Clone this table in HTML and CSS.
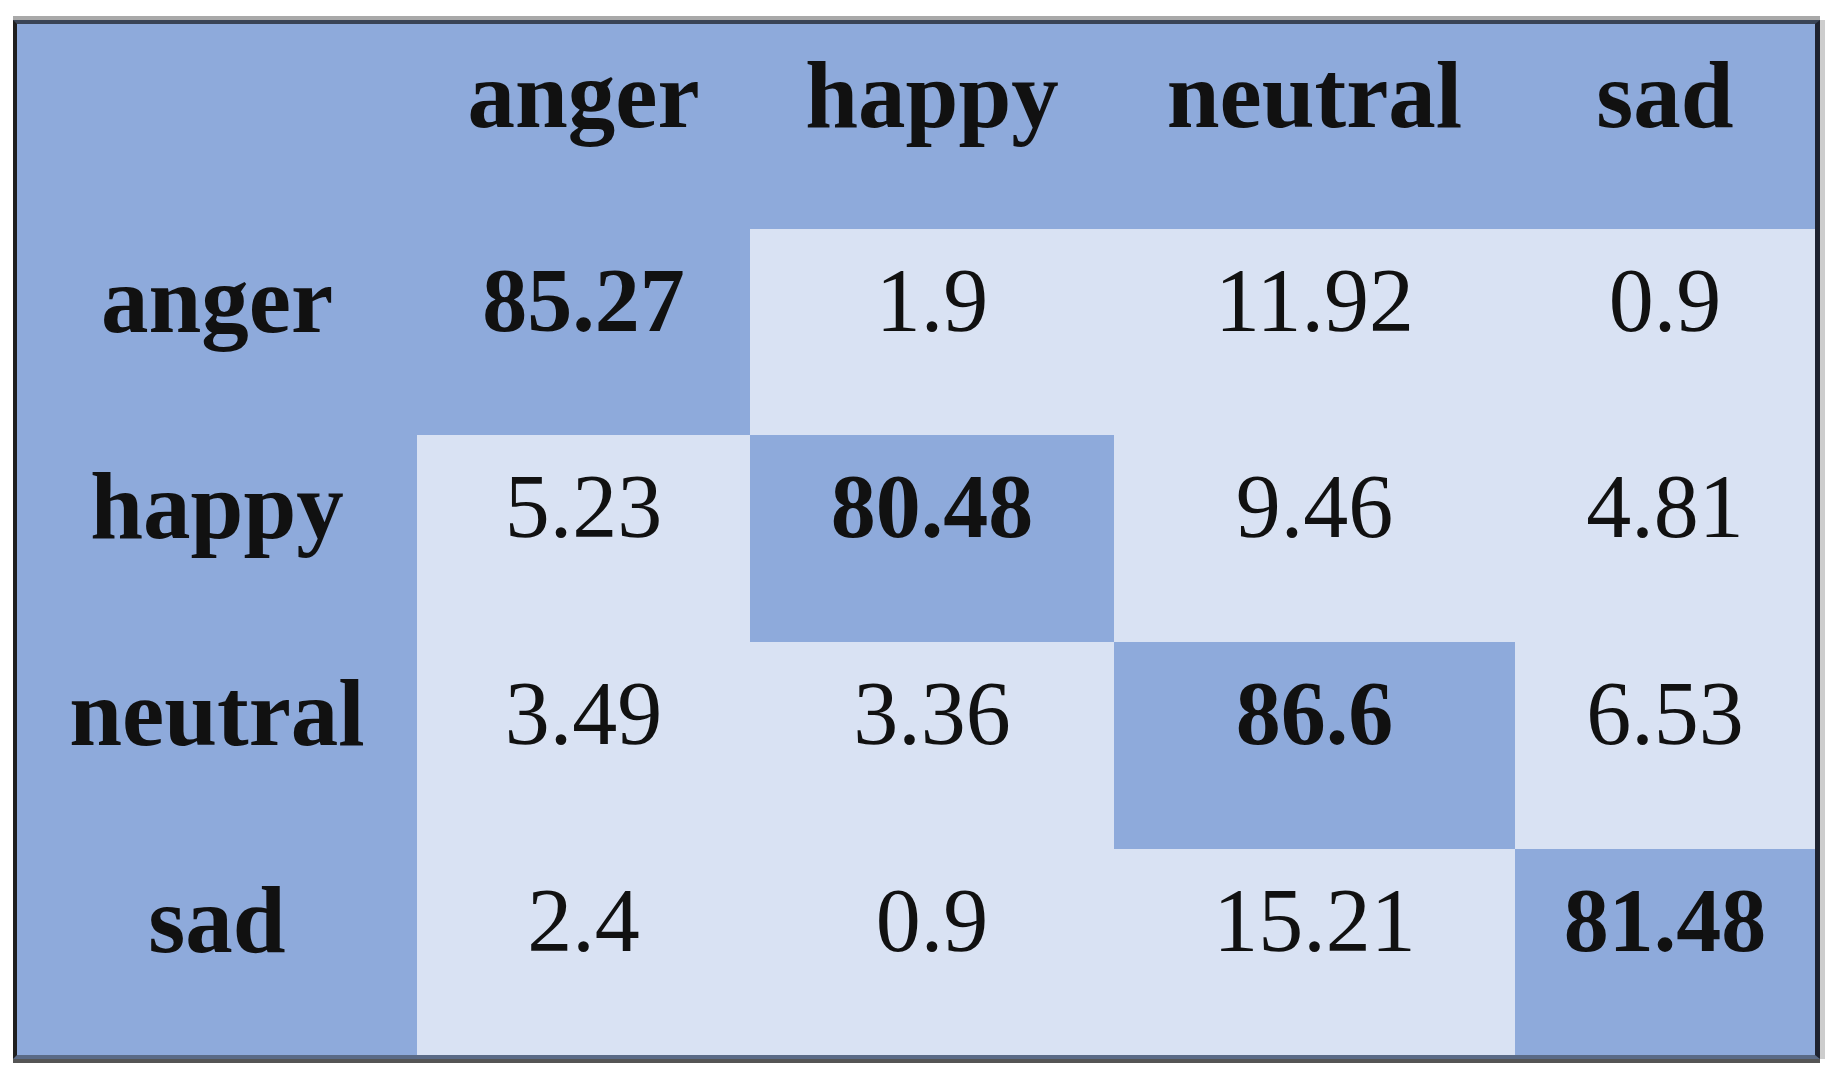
FILE: index.html
```html
<!DOCTYPE html>
<html>
<head>
  <meta charset="UTF-8">
  <title>Confusion matrix</title>
  <link rel="stylesheet" href="styles.css">
</head>
<body>
  <div class="frame">
    <table class="matrix">
      <colgroup>
        <col class="col-label">
        <col class="col-anger">
        <col class="col-happy">
        <col class="col-neutral">
        <col class="col-sad">
      </colgroup>
      <tr class="row-head">
        <th class="dark"></th>
        <th class="dark label">anger</th>
        <th class="dark label">happy</th>
        <th class="dark label">neutral</th>
        <th class="dark label">sad</th>
      </tr>
      <tr class="row-1">
        <th class="dark label">anger</th>
        <td class="dark num hit">85.27</td>
        <td class="light num">1.9</td>
        <td class="light num">11.92</td>
        <td class="light num">0.9</td>
      </tr>
      <tr class="row-2">
        <th class="dark label">happy</th>
        <td class="light num">5.23</td>
        <td class="dark num hit">80.48</td>
        <td class="light num">9.46</td>
        <td class="light num">4.81</td>
      </tr>
      <tr class="row-3">
        <th class="dark label">neutral</th>
        <td class="light num">3.49</td>
        <td class="light num">3.36</td>
        <td class="dark num hit">86.6</td>
        <td class="light num">6.53</td>
      </tr>
      <tr class="row-4">
        <th class="dark label">sad</th>
        <td class="light num">2.4</td>
        <td class="light num">0.9</td>
        <td class="light num">15.21</td>
        <td class="dark num hit">81.48</td>
      </tr>
    </table>
  </div>
</body>
</html>
```

FILE: styles.css
```css
body {
  margin: 0;
  background: #fff;
  font-family: "Liberation Serif", "DejaVu Serif", serif;
  color: #111;
}

.frame {
  display: inline-block;
  margin: 20px 0 0 13px;
  border-left: 4px solid #1f1f1f;
  border-right: 5px solid #1f2330;
  border-top: 4px solid #3a4456;
  border-bottom: 4px solid #5a6a86;
  box-shadow: 0 -4px 0 #a9a9a9, 5px 0 0 #cdcdcd, 0 4px 0 #555;
}

.matrix {
  border-collapse: collapse;
  table-layout: fixed;
  width: 1798px;
}

.col-label { width: 400px; }
.col-anger { width: 333px; }
.col-happy { width: 364px; }
.col-neutral { width: 401px; }
.col-sad { width: 300px; }

.row-head { height: 205px; }
.row-1 { height: 206px; }
.row-2 { height: 207px; }
.row-3 { height: 207px; }
.row-4 { height: 206px; }

.matrix th,
.matrix td {
  padding: 0;
  text-align: center;
  vertical-align: top;
  white-space: nowrap;
}

.dark {
  background-color: #8eaadb;
}

.light {
  background-color: #d9e2f3;
}

.label {
  font-size: 95px;
  font-weight: bold;
  padding-top: 16px !important;
}

.num {
  font-size: 90px;
  font-weight: normal;
  padding-top: 20px !important;
}

.num.hit {
  font-weight: bold;
}
```
